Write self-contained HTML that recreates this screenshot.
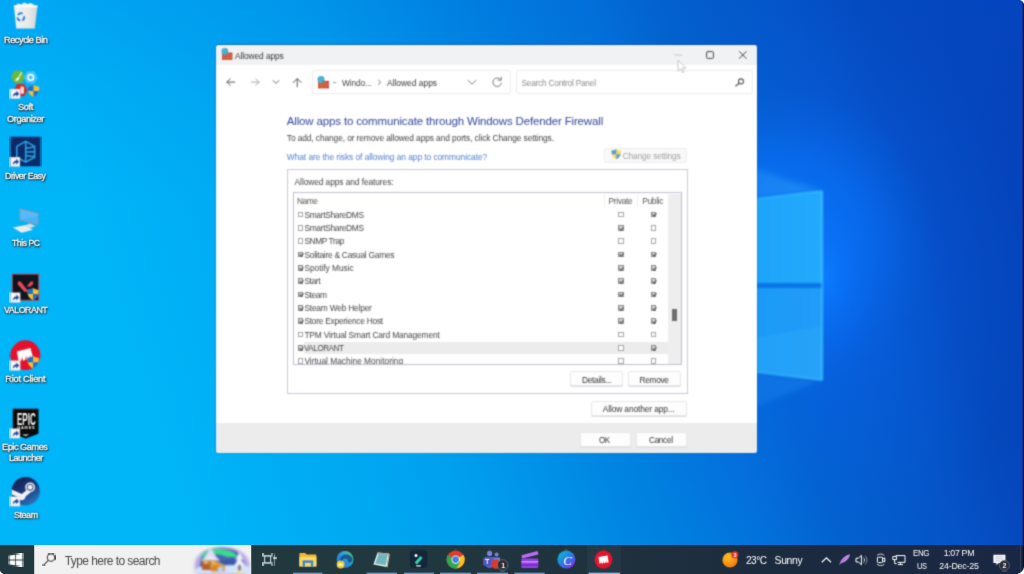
<!DOCTYPE html>
<html lang="en">
<head>
<meta charset="utf-8">
<title>Allowed apps</title>
<style>
*{box-sizing:border-box;margin:0;padding:0}
html,body{width:1024px;height:574px;overflow:hidden;background:#0a58d0;font-family:"Liberation Sans",sans-serif;}
#desk{position:absolute;left:0;top:0;width:1024px;height:574px;overflow:hidden;
 background:linear-gradient(72deg,#00b6f8 0%,#00b5f8 17%,#00aaf3 30%,#00a0ee 40%,#0090e8 48%,#0082e0 55%,#0272da 64%,#0262cc 70%,#0553c6 80%,#0448bc 86%,#0540ba 100%);}
#wall{position:absolute;left:0;top:0;width:1024px;height:574px;background:linear-gradient(180deg,rgba(0,90,215,.14) 0,rgba(0,90,215,.06) 90px,rgba(0,90,215,0) 200px)}
.abs{position:absolute}
.t{position:absolute;white-space:nowrap;line-height:1}
#dlgbox{position:absolute;left:216.1px;top:45.4px;width:540.7px;height:407.8px;background:#fff;border-radius:3px;overflow:hidden;box-shadow:0 -0.6px 0 .3px rgba(10,70,140,.55),0 0 2px rgba(0,40,120,.25);filter:url(#soft)}
#dlgtxt{position:absolute;left:0;top:0;width:1024px;height:574px;filter:url(#soft)}
.btn{position:absolute;background:#fdfdfd;border:1px solid #e8e8e8;border-radius:2px;box-shadow:0 1px 0 #dcdcdc}
.cb{position:absolute;border:.9px solid #a6a6a6;background:#fff}
.cb.on{background:#d4d4d4;border-color:#8a8a8a}
.cb.on::after{content:"";position:absolute;left:1.3px;top:-.4px;width:1.5px;height:3.2px;border:solid #4a4a4a;border-width:0 1.1px 1.1px 0;transform:rotate(40deg)}
.sh{-webkit-text-stroke:.35px #fff;text-shadow:0 1px 1.5px rgba(20,10,0,.95),0 0 2.5px rgba(20,10,0,.85),1px 1px 1.5px rgba(20,10,0,.8)}
#task{position:absolute;left:0;top:545px;width:1024px;height:29px;background:linear-gradient(90deg,#21383f 0,#21383f 400px,#1e303e 650px,#1b2a3e 810px,#1a2744 1000px)}

</style>
</head>
<body>
<div id="desk">
<svg width="0" height="0" style="position:absolute"><defs><filter id="soft" x="-5%" y="-5%" width="110%" height="110%" color-interpolation-filters="sRGB"><feConvolveMatrix order="5" kernelMatrix="0.0001 0.0020 0.0055 0.0020 0.0001 0.0020 0.0422 0.1171 0.0422 0.0020 0.0055 0.1171 0.3248 0.1171 0.0055 0.0020 0.0422 0.1171 0.0422 0.0020 0.0001 0.0020 0.0055 0.0020 0.0001" divisor="1" edgeMode="duplicate" preserveAlpha="false"/></filter><filter id="soft5" x="-5%" y="-5%" width="110%" height="110%" color-interpolation-filters="sRGB"><feConvolveMatrix order="3" kernelMatrix="0.0192 0.1001 0.0192 0.1001 0.5228 0.1001 0.0192 0.1001 0.0192" divisor="1" edgeMode="duplicate" preserveAlpha="false"/></filter><filter id="soft9" x="-5%" y="-5%" width="110%" height="110%" color-interpolation-filters="sRGB"><feConvolveMatrix order="5" kernelMatrix="0.0014 0.0090 0.0168 0.0090 0.0014 0.0090 0.0576 0.1067 0.0576 0.0090 0.0168 0.1067 0.1979 0.1067 0.0168 0.0090 0.0576 0.1067 0.0576 0.0090 0.0014 0.0090 0.0168 0.0090 0.0014" divisor="1" edgeMode="duplicate" preserveAlpha="false"/></filter></defs></svg>
<svg id="wall" viewBox="0 0 1024 574">
 <defs>
  <radialGradient id="glow" cx="826" cy="275" r="150" gradientUnits="userSpaceOnUse" gradientTransform="translate(826 275) scale(.62 1.25) translate(-826 -275)">
   <stop offset="0" stop-color="#0c7cff" stop-opacity=".9"/>
   <stop offset=".2" stop-color="#0a70f8" stop-opacity=".6"/>
   <stop offset=".55" stop-color="#0860e4" stop-opacity=".2"/>
   <stop offset="1" stop-color="#0858d6" stop-opacity="0"/>
  </radialGradient>
  <radialGradient id="glow2" cx="815" cy="280" r="300" gradientUnits="userSpaceOnUse" gradientTransform="translate(815 280) scale(.7 1) translate(-815 -280)">
   <stop offset="0" stop-color="#0a6cf6" stop-opacity=".55"/>
   <stop offset=".5" stop-color="#0a66f0" stop-opacity=".3"/>
   <stop offset="1" stop-color="#0a60e8" stop-opacity="0"/>
  </radialGradient>
  <radialGradient id="glow3" cx="785" cy="238" r="150" gradientUnits="userSpaceOnUse">
   <stop offset="0" stop-color="#0a7cff" stop-opacity=".9"/>
   <stop offset=".5" stop-color="#0876fa" stop-opacity=".62"/>
   <stop offset=".8" stop-color="#0870f4" stop-opacity=".18"/>
   <stop offset="1" stop-color="#0868ee" stop-opacity="0"/>
  </radialGradient>
  <linearGradient id="pane" x1="0" y1="0" x2="1" y2="0">
   <stop offset="0" stop-color="#16a0f8"/><stop offset="1" stop-color="#24aafc"/>
  </linearGradient>
  <linearGradient id="pane2" x1="0" y1="0" x2="1" y2="0">
   <stop offset="0" stop-color="#149af6"/><stop offset="1" stop-color="#229cf8"/>
  </linearGradient>
  <linearGradient id="beamU" x1="822" y1="190" x2="620" y2="130" gradientUnits="userSpaceOnUse">
   <stop offset="0" stop-color="#2ca0fc" stop-opacity=".55"/><stop offset="1" stop-color="#2c9cfc" stop-opacity="0"/>
  </linearGradient>
  <linearGradient id="beamD" x1="822" y1="380" x2="620" y2="440" gradientUnits="userSpaceOnUse">
   <stop offset="0" stop-color="#1c90f4" stop-opacity=".4"/><stop offset="1" stop-color="#1c90f4" stop-opacity="0"/>
  </linearGradient>
  <filter id="wb" color-interpolation-filters="sRGB"><feGaussianBlur stdDeviation=".8"/></filter>
  <filter id="wb3"><feGaussianBlur stdDeviation="3"/></filter>
 </defs>
 <rect x="520" y="0" width="504" height="574" fill="url(#glow2)"/>
 <rect x="600" y="60" width="400" height="360" fill="url(#glow3)"/>
 <rect x="600" y="60" width="424" height="440" fill="url(#glow)"/>
 <g filter="url(#wb3)">
 <polygon points="822,190.900 600,118 600,218" fill="url(#beamU)"/>
 <polygon points="822,380.100 600,470 600,353" fill="url(#beamD)"/>
 </g>
 <g filter="url(#wb)">
 <polygon points="700,205.500 822,190.900 822,283.200 700,283.200" fill="url(#pane)"/>
 <polygon points="700,288 822,288 822,380.100 700,365.500" fill="url(#pane2)"/>
 <polygon points="700,347.600 822,326.200 822,380.100 700,365.500" fill="#34b0fc" opacity=".3"/>
 <rect x="700" y="283.200" width="122" height="4.800" fill="#0a74e4"/>
 <line x1="822.200" y1="190.900" x2="822.200" y2="380.100" stroke="#4cd6ff" stroke-width="1.300" opacity=".9"/>
 <line x1="700" y1="205.500" x2="822" y2="190.900" stroke="#44d0ff" stroke-width="1.100" opacity=".85"/>
 <line x1="700" y1="365.500" x2="822" y2="380.100" stroke="#44d0ff" stroke-width="1.100" opacity=".85"/>
 </g>
</svg>
<svg class="abs" style="left:0;top:0" width="60" height="545" viewBox="0 0 60 545">
<defs><linearGradient id="stm" x1="0" y1="0" x2=".7" y2="1"><stop offset="0" stop-color="#0e1a44"/><stop offset=".55" stop-color="#1a3878"/><stop offset="1" stop-color="#2a78c0"/></linearGradient><linearGradient id="bin" x1="0" y1="0" x2="1" y2="0"><stop offset="0" stop-color="#f2f2f2"/><stop offset=".6" stop-color="#e9e9e9"/><stop offset="1" stop-color="#d4d6d8"/></linearGradient></defs>
<g filter="url(#soft)">
<path d="M15 6.500L18 3.600L21.500 4.400L24 2.600L27.500 4L31 3L36.500 6.500Z" fill="#f4f4f4"/><path d="M13.900 5.600H37.500L34.800 28.600H16.200Z" fill="url(#bin)"/><path d="M13.900 5.600H37.500L37.300 7.400H14.100Z" fill="#fafafa"/><g fill="none" stroke="#1c78d8" stroke-width="1.700"><path d="M18 15.200A3.600 3.600 0 0 1 22.600 13.600"/><path d="M24 16.200A3.600 3.600 0 0 1 22.400 20.400"/><path d="M20.400 20.600A3.600 3.600 0 0 1 17.400 17.400"/></g>
<polygon points="24.9,76.8 21.4,82.9 14.4,82.9 10.9,76.8 14.4,70.7 21.4,70.7" fill="#6cb83a"/><polygon points="37.7,77.4 34.2,83.5 27.2,83.5 23.7,77.4 27.2,71.3 34.2,71.3" fill="#46c2fa"/><polygon points="27.6,90.2 24.1,96.3 17.1,96.3 13.6,90.2 17.1,84.1 24.1,84.1" fill="#d42828"/>
<path d="M14.800 80.400L18.600 76.400L19.800 77.600L17.600 80.800ZM19 76L21.400 72L22.200 72.600L20 76.800Z" fill="#fff"/>
<circle cx="30.700" cy="77.400" r="2.800" fill="none" stroke="#fff" stroke-width="1.500"/>
<rect x="20.400" y="86.600" width="3.600" height="7.200" rx="1.200" fill="#ffd8d8"/>
<g transform="translate(27.3 84.6) scale(1.240)"><path d="M5 .2C3.600 1.200 2 1.600 .4 1.600C.4 5.400 1.300 8.400 5 10C8.700 8.400 9.600 5.400 9.600 1.600C8 1.600 6.400 1.200 5 .2Z" fill="#fbc02d"/><path d="M5 .2C3.600 1.200 2 1.600 .4 1.600C.4 2.900 .5 4 .8 5.100H5Z" fill="#1a6fd0"/><path d="M5 5.100H9.200C8.600 7.300 7.400 8.900 5 10Z" fill="#1a6fd0"/></g>
<g transform="translate(10.6 89.1) scale(0.950)"><rect x="0" y="0" width="10" height="10" fill="#f6f6f6" stroke="#d0d0d0" stroke-width=".5"/><path d="M2.400 8.800C2.200 5.600 3.600 3.900 6 3.800V1.800L9 4.900L6 8V6C4.400 5.900 3.200 6.800 2.400 8.800Z" fill="#1c3ea0"/></g>
<rect x="10.600" y="136.700" width="29.800" height="29.600" fill="#0c2a6a"/>
<g fill="none" stroke="#2aa6e2" stroke-width="1.500"><path d="M25.700 141.400L34.600 146.400V157.200L25.700 162.200L16.800 157.200V146.400Z"/><path d="M25.700 141.400V162.200M25.700 148.400L34.600 146.800M25.700 152L34.600 151.800M25.700 155.600L34.600 156.800"/></g>
<g transform="translate(10.6 157.2) scale(0.930)"><rect x="0" y="0" width="10" height="10" fill="#f6f6f6" stroke="#d0d0d0" stroke-width=".5"/><path d="M2.400 8.800C2.200 5.600 3.600 3.900 6 3.800V1.800L9 4.900L6 8V6C4.400 5.900 3.200 6.800 2.400 8.800Z" fill="#1c3ea0"/></g>
<path d="M19.500 208L38.500 213V225.300L19.500 220.300Z" fill="#8a9aa8"/><path d="M20.500 209.400L37.600 213.900V224L20.500 219.500Z" fill="#48b2f8"/><path d="M20.500 209.400L37.600 213.900V216L20.500 219.500Z" fill="#62c0ff" opacity=".6"/><path d="M24.500 225.400L30 223.600L35.700 226.200L30 228Z" fill="#dcdcdc"/><path d="M12.800 227.600L24.800 225.200L33 229.800L21.600 232.800Z" fill="#ececec"/>
<rect x="12.300" y="274.200" width="26.400" height="26" fill="#10141c" stroke="#c8404e" stroke-width=".900"/>
<path d="M17.800 281.400L20.600 281.600L28.600 291.800H24.400L17.800 284.400Z" fill="#e8485a"/><path d="M33.200 281.400L30.600 281.600L26.800 286.400L30.200 286.800L33.200 284Z" fill="#e8485a"/>
<g transform="translate(26.8 287.8) scale(1.240)"><path d="M5 .2C3.600 1.200 2 1.600 .4 1.600C.4 5.400 1.300 8.400 5 10C8.700 8.400 9.600 5.400 9.600 1.600C8 1.600 6.400 1.200 5 .2Z" fill="#fbc02d"/><path d="M5 .2C3.600 1.200 2 1.600 .4 1.600C.4 2.900 .5 4 .8 5.100H5Z" fill="#1a6fd0"/><path d="M5 5.100H9.200C8.600 7.300 7.400 8.900 5 10Z" fill="#1a6fd0"/></g>
<g transform="translate(10.6 292.8) scale(0.950)"><rect x="0" y="0" width="10" height="10" fill="#f6f6f6" stroke="#d0d0d0" stroke-width=".5"/><path d="M2.400 8.800C2.200 5.600 3.600 3.900 6 3.800V1.800L9 4.900L6 8V6C4.400 5.900 3.200 6.800 2.400 8.800Z" fill="#1c3ea0"/></g>
<circle cx="25.400" cy="355.200" r="14.900" fill="#e6102a"/>
<path d="M16.800 351.600L30.400 348L33.400 358.600L30.600 359L30 354.800L29 359.400L26.600 359.800L26.200 355.400L25 360.200L22.600 360.600L22.200 356.400L21 360.800L18.600 361Z" fill="#fff"/>
<g transform="translate(26.8 355.8) scale(1.260)"><path d="M5 .2C3.600 1.200 2 1.600 .4 1.600C.4 5.400 1.300 8.400 5 10C8.700 8.400 9.600 5.400 9.600 1.600C8 1.600 6.400 1.200 5 .2Z" fill="#fbc02d"/><path d="M5 .2C3.600 1.200 2 1.600 .4 1.600C.4 2.900 .5 4 .8 5.100H5Z" fill="#1a6fd0"/><path d="M5 5.100H9.200C8.600 7.300 7.400 8.900 5 10Z" fill="#1a6fd0"/></g>
<g transform="translate(10.6 360.8) scale(0.950)"><rect x="0" y="0" width="10" height="10" fill="#f6f6f6" stroke="#d0d0d0" stroke-width=".5"/><path d="M2.400 8.800C2.200 5.600 3.600 3.900 6 3.800V1.800L9 4.900L6 8V6C4.400 5.900 3.200 6.800 2.400 8.800Z" fill="#1c3ea0"/></g>
<path d="M12.800 408.700H38.500V432.200C38.500 433.200 38 433.800 37 434.200L25.700 438.400L14.300 434.200C13.300 433.800 12.800 433.200 12.800 432.200Z" fill="#0a0a0a"/>
<path d="M22 434.600H29.400L25.700 436.200Z" fill="#ddd"/>
<g transform="translate(10.6 428.8) scale(0.930)"><rect x="0" y="0" width="10" height="10" fill="#f6f6f6" stroke="#d0d0d0" stroke-width=".5"/><path d="M2.400 8.800C2.200 5.600 3.600 3.900 6 3.800V1.800L9 4.900L6 8V6C4.400 5.900 3.200 6.800 2.400 8.800Z" fill="#1c3ea0"/></g>
<circle cx="25.700" cy="491.200" r="14.200" fill="url(#stm)"/>
<path d="M11.600 489.600L21.800 494L27.400 489.400L31.600 491.600L25.600 496.400C25.400 498.800 23.400 500.400 21.200 500.200C19.200 500 17.800 498.600 17.400 496.800L11.800 494.400Z" fill="#f2f2f4"/>
<circle cx="30.100" cy="487.300" r="4.900" fill="#f2f2f4"/><circle cx="30.100" cy="487.300" r="3.400" fill="#1a3070"/><circle cx="30.100" cy="487.300" r="2.500" fill="#f2f2f4"/>
<g transform="translate(10.6 496.8) scale(0.930)"><rect x="0" y="0" width="10" height="10" fill="#f6f6f6" stroke="#d0d0d0" stroke-width=".5"/><path d="M2.400 8.800C2.200 5.600 3.600 3.900 6 3.800V1.800L9 4.900L6 8V6C4.400 5.900 3.200 6.800 2.400 8.800Z" fill="#1c3ea0"/></g>
</g></svg>
<div class="abs" style="left:0;top:0;width:60px;height:545px;filter:url(#soft)">
<span class="t " style="left:16.80px;top:410.65px;font-size:17px;color:#fff;font-weight:700;letter-spacing:0.000px;transform:scaleX(.47);transform-origin:0 50%;">EPIC</span>
<span class="t " style="left:17.20px;top:427.19px;font-size:3.8px;color:#fff;font-weight:700;letter-spacing:0.866px;">GAMES</span>
</div>
<div class="abs" style="left:0;top:0;width:70px;height:545px;filter:url(#soft5)">
<span class="t sh" style="left:4.10px;top:35.81px;font-size:9.3px;color:#fff;font-weight:400;letter-spacing:-0.465px;transform:scaleX(0.9900);transform-origin:0 50%;">Recycle Bin</span>
<span class="t sh" style="left:18.10px;top:103.31px;font-size:9.3px;color:#fff;font-weight:400;letter-spacing:-0.449px;">Soft</span>
<span class="t sh" style="left:6.90px;top:114.52px;font-size:9.3px;color:#fff;font-weight:400;letter-spacing:-0.416px;">Organizer</span>
<span class="t sh" style="left:5.20px;top:171.62px;font-size:9.3px;color:#fff;font-weight:400;letter-spacing:-0.465px;transform:scaleX(0.9425);transform-origin:0 50%;">Driver Easy</span>
<span class="t sh" style="left:11.90px;top:239.01px;font-size:9.3px;color:#fff;font-weight:400;letter-spacing:-0.465px;transform:scaleX(0.9282);transform-origin:0 50%;">This PC</span>
<span class="t sh" style="left:3.50px;top:306.42px;font-size:9.3px;color:#fff;font-weight:400;letter-spacing:-0.465px;transform:scaleX(0.9466);transform-origin:0 50%;">VALORANT</span>
<span class="t sh" style="left:5.20px;top:375.01px;font-size:9.3px;color:#fff;font-weight:400;letter-spacing:-0.249px;">Riot Client</span>
<span class="t sh" style="left:2.40px;top:443.01px;font-size:9.3px;color:#fff;font-weight:400;letter-spacing:-0.465px;transform:scaleX(0.9880);transform-origin:0 50%;">Epic Games</span>
<span class="t sh" style="left:8.60px;top:453.62px;font-size:9.3px;color:#fff;font-weight:400;letter-spacing:-0.465px;transform:scaleX(0.9627);transform-origin:0 50%;">Launcher</span>
<span class="t sh" style="left:13.60px;top:511.02px;font-size:9.3px;color:#fff;font-weight:400;letter-spacing:-0.465px;transform:scaleX(0.9634);transform-origin:0 50%;">Steam</span>
</div>
<div id="dlgbox"><div class="abs" style="left:0;top:0;width:541px;height:19.6px;background:#f1f2f3"></div><div class="abs" style="left:0;top:377.4px;width:541px;height:31px;background:#ececec"></div></div>
<div id="dlgtxt">
<span class="t " style="left:235.00px;top:51.62px;font-size:8.4px;color:#333;font-weight:400;letter-spacing:-0.093px;">Allowed apps</span>
<div class="abs" style="left:311.5px;top:70.0px;width:199.0px;height:23.7px;border:1px solid #ececec;border-radius:2px;background:#fff"></div>
<div class="abs" style="left:516.0px;top:70.0px;width:236.5px;height:23.7px;border:1px solid #ececec;border-radius:2px;background:#fff"></div>
<span class="t " style="left:342.00px;top:78.62px;font-size:8.4px;color:#444;font-weight:400;letter-spacing:-0.133px;">Windo...</span>
<span class="t " style="left:387.00px;top:78.62px;font-size:8.4px;color:#333;font-weight:400;letter-spacing:0.016px;">Allowed apps</span>
<span class="t " style="left:521.50px;top:78.82px;font-size:8.4px;color:#8c8c8c;font-weight:400;letter-spacing:-0.269px;">Search Control Panel</span>
<span class="t " style="left:286.80px;top:116.23px;font-size:11.5px;color:#34439a;font-weight:400;letter-spacing:-0.154px;">Allow apps to communicate through Windows Defender Firewall</span>
<span class="t " style="left:286.80px;top:133.92px;font-size:8.4px;color:#404040;font-weight:400;letter-spacing:-0.099px;">To add, change, or remove allowed apps and ports, click Change settings.</span>
<span class="t " style="left:286.80px;top:153.02px;font-size:8.4px;color:#4f7fcc;font-weight:400;letter-spacing:-0.058px;">What are the risks of allowing an app to communicate?</span>
<div class="abs" style="left:604.4px;top:147.6px;width:82.4px;height:15.7px;background:#f8f8f8;border:1px solid #eeeeee;border-radius:2px"></div>
<span class="t " style="left:622.70px;top:152.02px;font-size:8.4px;color:#a2a2a2;font-weight:400;letter-spacing:-0.174px;">Change settings</span>
<div class="abs" style="left:286.6px;top:168.6px;width:401.4px;height:225.4px;border:1.3px solid #c6c6e0"></div>
<span class="t " style="left:294.60px;top:178.02px;font-size:8.4px;color:#444;font-weight:400;letter-spacing:-0.082px;">Allowed apps and features:</span>
<div class="abs" style="left:293.1px;top:192.4px;width:388.5px;height:172.3px;border:1.2px solid #bdbdd4;background:#fff"></div>
<div class="abs" style="left:668.0px;top:193.5px;width:12.5px;height:170.1px;background:#eeeeee"></div>
<div class="abs" style="left:672.0px;top:309.4px;width:5.4px;height:12.0px;background:#6e6e6e"></div>
<div class="abs" style="left:603.8px;top:194.0px;width:1.0px;height:13.0px;background:#efefef"></div>
<div class="abs" style="left:637.4px;top:194.0px;width:1.0px;height:13.0px;background:#efefef"></div>
<span class="t " style="left:297.20px;top:196.62px;font-size:8.4px;color:#555;font-weight:400;letter-spacing:-0.420px;transform:scaleX(0.9960);transform-origin:0 50%;">Name</span>
<span class="t " style="left:608.60px;top:196.62px;font-size:8.4px;color:#555;font-weight:400;letter-spacing:-0.313px;">Private</span>
<span class="t " style="left:642.30px;top:196.62px;font-size:8.4px;color:#555;font-weight:400;letter-spacing:-0.342px;">Public</span>
<div class="abs" style="left:0;top:0;width:1024px;height:363.6px;overflow:hidden">
<div class="cb" style="left:297.6px;top:211.7px;width:5.3px;height:5.5px;"></div>
<span class="t " style="left:304.40px;top:210.82px;font-size:8.4px;color:#444;font-weight:400;letter-spacing:-0.308px;">SmartShareDMS</span>
<div class="cb" style="left:618.2px;top:211.6px;width:5.7px;height:5.7px;"></div>
<div class="cb on" style="left:650.6px;top:211.6px;width:5.7px;height:5.7px;"></div>
<div class="cb" style="left:297.6px;top:225.0px;width:5.3px;height:5.5px;"></div>
<span class="t " style="left:304.40px;top:224.15px;font-size:8.4px;color:#444;font-weight:400;letter-spacing:-0.308px;">SmartShareDMS</span>
<div class="cb on" style="left:618.2px;top:224.9px;width:5.7px;height:5.7px;"></div>
<div class="cb" style="left:650.6px;top:224.9px;width:5.7px;height:5.7px;"></div>
<div class="cb" style="left:297.6px;top:238.4px;width:5.3px;height:5.5px;"></div>
<span class="t " style="left:304.40px;top:237.48px;font-size:8.4px;color:#444;font-weight:400;letter-spacing:0.000px;letter-spacing:-0.4px;">SNMP Trap</span>
<div class="cb" style="left:618.2px;top:238.3px;width:5.7px;height:5.7px;"></div>
<div class="cb" style="left:650.6px;top:238.3px;width:5.7px;height:5.7px;"></div>
<div class="cb on" style="left:297.6px;top:251.7px;width:5.3px;height:5.5px;"></div>
<span class="t " style="left:304.40px;top:250.81px;font-size:8.4px;color:#444;font-weight:400;letter-spacing:-0.252px;">Solitaire &amp; Casual Games</span>
<div class="cb on" style="left:618.2px;top:251.6px;width:5.7px;height:5.7px;"></div>
<div class="cb on" style="left:650.6px;top:251.6px;width:5.7px;height:5.7px;"></div>
<div class="cb on" style="left:297.6px;top:265.0px;width:5.3px;height:5.5px;"></div>
<span class="t " style="left:304.40px;top:264.14px;font-size:8.4px;color:#444;font-weight:400;letter-spacing:-0.034px;">Spotify Music</span>
<div class="cb on" style="left:618.2px;top:264.9px;width:5.7px;height:5.7px;"></div>
<div class="cb on" style="left:650.6px;top:264.9px;width:5.7px;height:5.7px;"></div>
<div class="cb on" style="left:297.6px;top:278.4px;width:5.3px;height:5.5px;"></div>
<span class="t " style="left:304.40px;top:277.47px;font-size:8.4px;color:#444;font-weight:400;letter-spacing:0.000px;letter-spacing:-0.4px;">Start</span>
<div class="cb on" style="left:618.2px;top:278.2px;width:5.7px;height:5.7px;"></div>
<div class="cb on" style="left:650.6px;top:278.2px;width:5.7px;height:5.7px;"></div>
<div class="cb on" style="left:297.6px;top:291.7px;width:5.3px;height:5.5px;"></div>
<span class="t " style="left:304.40px;top:290.80px;font-size:8.4px;color:#444;font-weight:400;letter-spacing:0.000px;letter-spacing:-0.4px;">Steam</span>
<div class="cb on" style="left:618.2px;top:291.6px;width:5.7px;height:5.7px;"></div>
<div class="cb on" style="left:650.6px;top:291.6px;width:5.7px;height:5.7px;"></div>
<div class="cb on" style="left:297.6px;top:305.0px;width:5.3px;height:5.5px;"></div>
<span class="t " style="left:304.40px;top:304.13px;font-size:8.4px;color:#444;font-weight:400;letter-spacing:-0.207px;">Steam Web Helper</span>
<div class="cb on" style="left:618.2px;top:304.9px;width:5.7px;height:5.7px;"></div>
<div class="cb on" style="left:650.6px;top:304.9px;width:5.7px;height:5.7px;"></div>
<div class="cb on" style="left:297.6px;top:318.3px;width:5.3px;height:5.5px;"></div>
<span class="t " style="left:304.40px;top:317.46px;font-size:8.4px;color:#444;font-weight:400;letter-spacing:-0.250px;">Store Experience Host</span>
<div class="cb on" style="left:618.2px;top:318.2px;width:5.7px;height:5.7px;"></div>
<div class="cb on" style="left:650.6px;top:318.2px;width:5.7px;height:5.7px;"></div>
<div class="cb" style="left:297.6px;top:331.7px;width:5.3px;height:5.5px;"></div>
<span class="t " style="left:304.40px;top:330.79px;font-size:8.4px;color:#444;font-weight:400;letter-spacing:-0.142px;">TPM Virtual Smart Card Management</span>
<div class="cb" style="left:618.2px;top:331.6px;width:5.7px;height:5.7px;"></div>
<div class="cb" style="left:650.6px;top:331.6px;width:5.7px;height:5.7px;"></div>
<div class="abs" style="left:304.0px;top:341.6px;width:364.0px;height:12.5px;background:#ececec"></div>
<div class="cb on" style="left:297.6px;top:345.0px;width:5.3px;height:5.5px;"></div>
<span class="t " style="left:304.40px;top:344.12px;font-size:8.4px;color:#444;font-weight:400;letter-spacing:-0.420px;transform:scaleX(0.9593);transform-origin:0 50%;">VALORANT</span>
<div class="cb" style="left:618.2px;top:344.9px;width:5.7px;height:5.7px;"></div>
<div class="cb on" style="left:650.6px;top:344.9px;width:5.7px;height:5.7px;"></div>
<div class="cb" style="left:297.6px;top:358.3px;width:5.3px;height:5.5px;"></div>
<span class="t " style="left:304.40px;top:357.45px;font-size:8.4px;color:#444;font-weight:400;letter-spacing:-0.012px;">Virtual Machine Monitoring</span>
<div class="cb" style="left:618.2px;top:358.2px;width:5.7px;height:5.7px;"></div>
<div class="cb" style="left:650.6px;top:358.2px;width:5.7px;height:5.7px;"></div>
</div>
<div class="btn" style="left:570.0px;top:371.0px;width:53.3px;height:15.4px;"></div>
<div class="btn" style="left:627.8px;top:371.0px;width:53.0px;height:15.4px;"></div>
<div class="btn" style="left:590.5px;top:401.0px;width:96.7px;height:14.7px;"></div>
<div class="btn" style="left:579.5px;top:432.0px;width:51.0px;height:14.8px;"></div>
<div class="btn" style="left:636.0px;top:432.0px;width:51.1px;height:14.8px;"></div>
<span class="t " style="left:581.90px;top:375.52px;font-size:8.4px;color:#333;font-weight:400;letter-spacing:-0.299px;">Details...</span>
<span class="t " style="left:639.60px;top:375.52px;font-size:8.4px;color:#333;font-weight:400;letter-spacing:-0.358px;">Remove</span>
<span class="t " style="left:602.70px;top:404.82px;font-size:8.4px;color:#333;font-weight:400;letter-spacing:-0.112px;">Allow another app...</span>
<span class="t " style="left:598.80px;top:436.02px;font-size:8.4px;color:#333;font-weight:400;letter-spacing:-0.420px;transform:scaleX(0.9581);transform-origin:0 50%;">OK</span>
<span class="t " style="left:649.00px;top:436.02px;font-size:8.4px;color:#333;font-weight:400;letter-spacing:-0.416px;">Cancel</span>
<svg class="abs" style="left:220.6px;top:48.4px" width="12.0" height="12.0" viewBox="0 0 12 12"><rect x="1" y="4.6" width="10.4" height="7.2" fill="#c4472c"/><path d="M1 7h10.4M1 9.4h10.4M4.5 4.6v2.4M8 4.6v2.4M3 7v2.4M6.5 7v2.4M9.8 7v2.4M4.5 9.4v2.4M8 9.4v2.4" stroke="#e08a6a" stroke-width=".6" fill="none"/><circle cx="3.8" cy="3.4" r="3.3" fill="#3aa6dc"/><path d="M2 2.2c1.2-.8 2.4.2 3 1.4M1.4 4.4c1 .4 2 .2 2.6 1.4" stroke="#8fd6a0" stroke-width=".9" fill="none"/></svg>
<svg class="abs" style="left:316.6px;top:76.2px" width="12.6" height="12.6" viewBox="0 0 12 12"><rect x="1" y="4.6" width="10.4" height="7.2" fill="#c4472c"/><path d="M1 7h10.4M1 9.4h10.4M4.5 4.6v2.4M8 4.6v2.4M3 7v2.4M6.5 7v2.4M9.8 7v2.4M4.5 9.4v2.4M8 9.4v2.4" stroke="#e08a6a" stroke-width=".6" fill="none"/><circle cx="3.8" cy="3.4" r="3.3" fill="#3aa6dc"/><path d="M2 2.2c1.2-.8 2.4.2 3 1.4M1.4 4.4c1 .4 2 .2 2.6 1.4" stroke="#8fd6a0" stroke-width=".9" fill="none"/></svg>
<svg class="abs" style="left:216px;top:45px" width="541" height="60" viewBox="216 45 541 60" fill="none" stroke-linecap="round" stroke-linejoin="round"><path d="M234.6 82.1H227M230.2 78.8L226.9 82.1L230.2 85.4" stroke="#555" stroke-width="1"/><path d="M251.4 82.1H259M255.8 78.8L259.1 82.1L255.8 85.4" stroke="#a8a8a8" stroke-width="1"/><path d="M273.2 80.6L276 83.4L278.8 80.6" stroke="#666" stroke-width="1"/><path d="M297.2 86.8V79M293.2 82.6L297.2 78.6L301.2 82.6" stroke="#555" stroke-width="1"/><path d="M468.2 80.4L472 84.2L475.8 80.4" stroke="#777" stroke-width="1"/><path d="M500.6 79.6A4.3 4.3 0 1 0 501.4 83.2" stroke="#777" stroke-width="1"/><path d="M501.2 77.2V80.2H498.2" stroke="#777" stroke-width="1"/><path d="M333.4 82.6h2.4" stroke="#888" stroke-width=".9"/><path d="M378.6 80.4L380.8 82.4L378.6 84.4" stroke="#666" stroke-width=".9"/><circle cx="741" cy="81.4" r="2.5" stroke="#555" stroke-width="1.1"/><path d="M739.2 83.2L735.8 86" stroke="#555" stroke-width="1.2"/><path d="M674.8 55h7" stroke="#c4c4c4" stroke-width="1"/><rect x="706.6" y="51.6" width="6.8" height="6.8" rx="1" stroke="#444" stroke-width="1"/><path d="M739.4 51.6L746.2 58.4M746.2 51.6L739.4 58.4" stroke="#444" stroke-width="1"/><path d="M678 60.8V71.2L680.6 68.8L682.4 72.6L684 71.9L682.3 68.2H685.6Z" fill="#fff" stroke="#b8b8b8" stroke-width=".8"/></svg>
<svg class="abs" style="left:610.6px;top:149.4px" width="10.6" height="10.6" viewBox="0 0 10 10"><path d="M5 .3C3.6 1.2 2 1.5 .5 1.5c0 3.6.8 6.6 4.5 8.2C8.7 8.1 9.5 5.100 9.500 1.500C8 1.500 6.400 1.200 5 .300Z" fill="#f4dc6a"/><path d="M5 .3C3.6 1.2 2 1.5 .5 1.5c0 1.300.1 2.400.4 3.500H5Z" fill="#5a9bd4"/><path d="M5 5h4.100C8.600 7 7.500 8.600 5 9.700Z" fill="#5a9bd4"/></svg>
</div>
<div id="task">
<svg class="abs" style="left:0;top:0" width="1024" height="29" viewBox="0 545 1024 29">
<defs>
<filter id="b1" x="-20%" y="-20%" width="140%" height="140%" color-interpolation-filters="sRGB"><feGaussianBlur stdDeviation=".9"/></filter>

<linearGradient id="fade" x1="0" x2="1" y1="0" y2="0"><stop offset="0" stop-color="#f1f1f1" stop-opacity="1"/><stop offset=".25" stop-color="#f1f1f1" stop-opacity="0"/></linearGradient>
<radialGradient id="halo" cx="222" cy="566" r="32" gradientUnits="userSpaceOnUse" gradientTransform="translate(222 566) scale(1 .72) translate(-222 -566)"><stop offset="0" stop-color="#a99be0"/><stop offset=".8" stop-color="#b6a6e2"/><stop offset="1" stop-color="#f1f1f1" stop-opacity="0"/></radialGradient>
<linearGradient id="canva" x1="0" y1="0" x2=".9" y2="1"><stop offset="0" stop-color="#00c8d0"/><stop offset=".5" stop-color="#2a7ee0"/><stop offset="1" stop-color="#8a2ae8"/></linearGradient>
<radialGradient id="sun" cx=".35" cy=".3" r=".8"><stop offset="0" stop-color="#ffc21a"/><stop offset="1" stop-color="#f0701a"/></radialGradient>
<linearGradient id="edgeg" x1="0" y1="1" x2="1" y2="0"><stop offset="0" stop-color="#1464c8"/><stop offset=".55" stop-color="#2a9ae0"/><stop offset="1" stop-color="#5fd068"/></linearGradient>
<clipPath id="sclip"><rect x="34.2" y="545" width="217" height="29"/></clipPath>
</defs>
<rect x="34.2" y="545" width="217" height="29" fill="#f1f1f1"/>
<g fill="#fff" filter="url(#soft5)"><path d="M9.600 555.600L15.200 554.800V559.600H9.600Z"/><path d="M16 554.700L22.400 553.800V559.600H16Z"/><path d="M9.600 560.400H15.200V565.200L9.600 564.400Z"/><path d="M16 560.400H22.400V566.200L16 565.300Z"/></g>
<g fill="none" stroke="#444" stroke-width="1.100" filter="url(#soft5)"><circle cx="51" cy="557.600" r="3.700"/><path d="M48.300 560.300L43.400 565.400"/></g>
<g clip-path="url(#sclip)"><g filter="url(#b1)">
<ellipse cx="222" cy="566" rx="30" ry="20" fill="url(#halo)"/>
<path d="M200 566C200 552 212 548.500 222 548.500S244 552 244 566V574H200Z" fill="#4a62b4"/>
<path d="M201 556C206 549 214 548 222 549C230 550 236 552 238 558C232 556 228 558 224 556C218 553 210 554 201 558Z" fill="#3fd890"/>
<path d="M215 556L222 561L232 559L242 565V568H212Z" fill="#3a58a8"/>
<path d="M192 574C195 567 203 565 210 567C220 565 236 564 251 567V574Z" fill="#d2e2fb"/>
<path d="M210.600 547.300L216.400 557L219.800 560.300H201.400L204.800 557Z" fill="#dcdcf6"/>
<path d="M200.500 560.800L210.600 556L220.500 560.800Z" fill="#e8e8fb"/>
<rect x="202" y="560.500" width="15" height="9.500" fill="#b4602c"/>
<rect x="203.500" y="561.300" width="5" height="2.200" fill="#f4d070"/><rect x="210.500" y="561.300" width="5" height="2.200" fill="#f4d070"/>
<path d="M210 565.500L218 562.300L224.600 565.500V571.500H211.500Z" fill="#d8842e"/>
<path d="M209.600 565.800L218 562L225 565.800L224 566.600L218 563.600L210.600 566.600Z" fill="#f2c24e"/>
<rect x="217.800" y="566.600" width="5.200" height="5" fill="#bcd2f6"/>
<path d="M239.400 552L243.500 560L241 559.500L245 566H234L237.800 559.500L235.500 560Z" fill="#eef0fb"/>
<rect x="238.700" y="565" width="1.600" height="6" fill="#4a3028"/>
<ellipse cx="240" cy="572" rx="6" ry="1.500" fill="#f4e6b0"/>
</g>
<rect x="186" y="545" width="40" height="29" fill="url(#fade)"/>
</g>
<g fill="none" stroke="#c4d0d6" stroke-width="1.200" filter="url(#soft5)"><rect x="264.600" y="555.900" width="6" height="7"/><path d="M263.200 554V555.900H272V554M263.200 565V562.900H272V565"/><path d="M274.500 554.600V564.800" stroke-width=".9" stroke="#9fb0b8"/><circle cx="274.500" cy="558" r="1.300" fill="#e6eef2" stroke="none"/></g>
<rect x="293.0" y="572.600" width="29.4" height="1.400" fill="#7aa6d6" opacity=".85"/>
<rect x="366.5" y="572.600" width="30.5" height="1.400" fill="#7aa6d6" opacity=".85"/>
<rect x="404.0" y="572.600" width="30.0" height="1.400" fill="#7aa6d6" opacity=".85"/>
<rect x="440.0" y="572.600" width="30.8" height="1.400" fill="#7aa6d6" opacity=".85"/>
<rect x="477.0" y="572.600" width="31.0" height="1.400" fill="#7aa6d6" opacity=".85"/>
<rect x="514.4" y="572.600" width="30.3" height="1.400" fill="#7aa6d6" opacity=".85"/>
<rect x="588.6" y="572.600" width="31.4" height="1.400" fill="#9cc4ee" opacity=".85"/>
<rect x="587" y="545" width="34" height="29" fill="#fff" opacity=".035"/>
<g filter="url(#soft5)">
<path d="M299.400 554.200C299.400 553.500 299.900 553 300.600 553H305.200L306.800 554.600H315.200C315.900 554.600 316.400 555.100 316.400 555.800V566.400H299.400Z" fill="#f4b932"/><path d="M299.400 557H316.400V566.400H299.400Z" fill="#fbd866"/><path d="M302.600 560.400H313.200V566.400H302.600Z" fill="#3a86d8"/><path d="M305 562.800H310.800V566.400H305Z" fill="#fbd866"/>
<circle cx="345" cy="559.600" r="8.500" fill="url(#edgeg)"/><path d="M340 560.500C340 556.500 343.500 554.600 346.500 554.600C350 554.600 352.500 557 352.500 559.500C352.500 561.500 351 562.600 349.400 562.600C348.200 562.600 347.600 562 347.800 561C348 560 347 558.600 345 558.600C342.800 558.600 341.600 560.600 342.200 562.800C340.800 562.400 340 561.600 340 560.500Z" fill="#12407e" opacity=".75"/><circle cx="340.600" cy="564.600" r="4" fill="#f2c430"/><rect x="338.400" y="563.200" width="4.400" height="2.800" rx=".5" fill="#fff4c0"/>
<path d="M377.600 552.400L389 553.600L386.600 567L373.400 564.600Z" fill="#e6eef0"/><path d="M378.600 554L387.600 555L385.600 565.200L375.200 563.400Z" fill="#6fb6bc"/><path d="M377.600 552.400L389 553.600L388.700 555.200L377.200 554Z" fill="#9aa4ac"/><path d="M386.600 567L389 553.600L389.800 554.400L387.600 567.400Z" fill="#c8b89a"/>
<rect x="410" y="550.400" width="17.200" height="17.600" rx="3" fill="#14263a"/><path d="M414.600 562.400L420.400 556L422.600 558L417 564.400Z" fill="#2fd0a8"/><circle cx="416" cy="555.400" r="1.500" fill="#fff"/><rect x="416" y="565.200" width="5" height="1.200" rx=".6" fill="#e8eef4"/>
<circle cx="455.600" cy="559.600" r="9" fill="#e33b2e"/><path d="M455.600 559.600L447.800 564.100A9 9 0 0 0 456.400 568.600L460.200 562Z" fill="#2da94f"/><path d="M447.800 564.100A9 9 0 0 1 447.800 555.100L455.600 559.600Z" fill="#2da94f"/><path d="M455.600 559.600L463.400 555.100A9 9 0 0 1 456.400 568.600L460.200 562Z" fill="#fcc31e"/><path d="M455.600 559.600H464.600A9 9 0 0 0 463.400 555.100Z" fill="#fcc31e"/><circle cx="455.600" cy="559.600" r="4.200" fill="#fff"/><circle cx="455.600" cy="559.600" r="3.300" fill="#3f80ea"/>
<circle cx="489.600" cy="553.400" r="2.600" fill="#7b83eb"/><circle cx="496.600" cy="554.600" r="2" fill="#7b83eb"/><path d="M485 557H494.400V563.400A4.700 4.700 0 0 1 485 563.400Z" fill="#5a62d4"/><path d="M494 557.600H500V562.400A3 3 0 0 1 494 562.400Z" fill="#7b83eb"/><rect x="483" y="557.400" width="8.400" height="8.400" rx="1" fill="#4b53bc"/><path d="M485 559.400H489.400M487.200 559.400V564" stroke="#fff" stroke-width="1" fill="none"/><circle cx="496" cy="564" r="4.800" fill="#d83b2a"/><circle cx="502.600" cy="565" r="5.300" fill="#2a2c34" stroke="#8a8c94" stroke-width=".600"/>
<path d="M521.400 555.200L537.600 551L538.400 554.400L522.200 558.600Z" fill="#c06af8"/><rect x="521.400" y="558.600" width="16.800" height="9.400" rx="1" fill="#9440e8"/><rect x="521.400" y="561" width="16.800" height="1.600" fill="#c88af8"/><rect x="521.400" y="564.400" width="16.800" height="1.400" fill="#6a2ac0"/>
<circle cx="566.400" cy="559.600" r="9" fill="url(#canva)"/>
<circle cx="603.500" cy="559.600" r="9" fill="#e5132c"/><path d="M598.400 557L607.600 555.400L608.600 562.400L606.400 562.800L606.200 560.600L605.400 563L603.800 563.200L603.600 561L602.800 563.400L601.400 563.600L601.200 561.400L600.400 563.600L599.400 563.800Z" fill="#fff"/>
<circle cx="730" cy="560" r="7.600" fill="url(#sun)"/><circle cx="734.900" cy="554.800" r="3.500" fill="#e0302a"/>
<path d="M821.800 562.200L826.400 557.800L831 562.200" fill="none" stroke="#fff" stroke-width="1.200"/>
<path d="M839.400 564.400C841 559 845 555 850 554.200C849.600 558.600 845.600 562 840.600 563.600Z" fill="#c48ae6"/><path d="M839 565L846 557.600" stroke="#a060c8" stroke-width=".700" fill="none"/>
<path d="M856 558.200H858.400L861.400 555.400V564.800L858.400 562H856Z" fill="none" stroke="#fff" stroke-width="1"/><path d="M863.400 557.600A3.400 3.400 0 0 1 863.400 562.600" fill="none" stroke="#fff" stroke-width=".900" opacity=".9"/><path d="M865.200 555.800A6 6 0 0 1 865.200 564.400" fill="none" stroke="#fff" stroke-width=".800" opacity=".55"/>
<g fill="none" stroke="#fff" stroke-width="1"><rect x="877.400" y="557.200" width="5.200" height="5.400" rx=".8"/><path d="M882.600 559L884.800 557.800V562L882.600 560.800"/><path d="M877 555.400C878.600 553.600 882.600 553.600 884.200 555.400M877 564.200C878.600 566 882.600 566 884.200 564.200" opacity=".8"/></g>
<g fill="none" stroke="#fff" stroke-width="1"><path d="M895.600 555.600H905V562.400H897.600"/><path d="M900.400 562.400V564.400M897.800 564.600H903"/><path d="M892.800 556.600H896.600V559.600H892.800ZM894.700 559.600V563.600H896.600"/></g>
<path d="M993.400 554.800H1005.400V563H998.600L996.400 565.200V563H993.400Z" fill="#fff"/><path d="M995.400 556.900H1003.400M995.400 558.900H1003.400M995.400 560.900H1000" stroke="#7c8696" stroke-width=".550"/><circle cx="1004.400" cy="565.400" r="5" fill="#262a32" stroke="#6a7482" stroke-width=".800"/>
</g>
</svg>
</div>
<div class="abs" style="left:0;top:0;width:1024px;height:574px;filter:url(#soft5)">
<span class="t " style="left:64.70px;top:555.00px;font-size:12px;color:#484848;font-weight:400;letter-spacing:-0.570px;">Type here to search</span>
<span class="t " style="left:563.20px;top:553.95px;font-size:13px;color:#fff;font-weight:400;letter-spacing:0.000px;font-style:italic;font-family:'Liberation Serif',serif;">C</span>
<span class="t " style="left:501.20px;top:562.05px;font-size:7px;color:#fff;font-weight:700;letter-spacing:0.000px;">1</span>
<span class="t " style="left:733.60px;top:552.52px;font-size:5.5px;color:#fff;font-weight:700;letter-spacing:0.000px;">3</span>
<span class="t " style="left:745.80px;top:555.52px;font-size:10.4px;color:#fff;font-weight:400;letter-spacing:-0.520px;transform:scaleX(0.9696);transform-origin:0 50%;">23&deg;C</span>
<span class="t " style="left:774.60px;top:555.52px;font-size:10.4px;color:#fff;font-weight:400;letter-spacing:-0.367px;">Sunny</span>
<span class="t " style="left:912.90px;top:549.14px;font-size:8.8px;color:#fff;font-weight:400;letter-spacing:-0.440px;transform:scaleX(0.9067);transform-origin:0 50%;">ENG</span>
<span class="t " style="left:916.90px;top:562.04px;font-size:8.8px;color:#fff;font-weight:400;letter-spacing:-0.440px;transform:scaleX(0.8479);transform-origin:0 50%;">US</span>
<span class="t " style="left:943.70px;top:549.14px;font-size:8.8px;color:#fff;font-weight:400;letter-spacing:-0.328px;">1:07 PM</span>
<span class="t " style="left:939.20px;top:562.04px;font-size:8.8px;color:#fff;font-weight:400;letter-spacing:-0.160px;">24-Dec-25</span>
<span class="t " style="left:1002.60px;top:562.45px;font-size:7px;color:#fff;font-weight:700;letter-spacing:0.000px;">2</span>
</div>
<svg class="abs" style="left:0;top:0" width="1024" height="574" viewBox="0 0 1024 574"><rect x="1022.700" y="0" width="1.300" height="574" fill="#080c24"/><rect x="1020.200" y="545" width=".7" height="29" fill="#4a5a70" opacity=".6"/><path d="M1024 0V4.500C1023.600 2.400 1022.400 .8 1020 0Z" fill="#fff"/><path d="M1024 574V567C1023.400 570.600 1021 573.200 1017.400 574Z" fill="#fff"/><path d="M0 574V570.600C.6 572.400 1.800 573.500 3.800 574Z" fill="#fff"/></svg>
</div>
</body>
</html>
